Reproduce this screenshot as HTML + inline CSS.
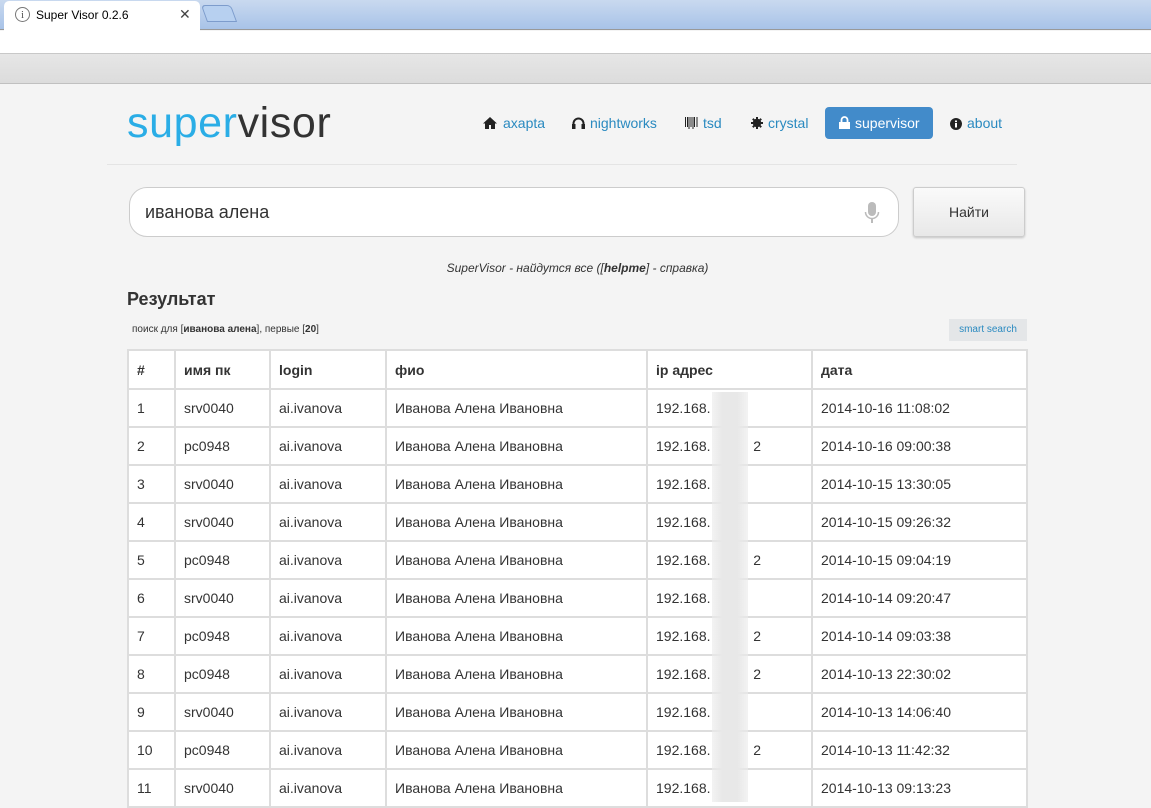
<!DOCTYPE html><html><head><meta charset="utf-8"><style>
*{box-sizing:border-box}body{margin:0;width:1151px;height:808px;overflow:hidden;background:#f4f4f4;font-family:"Liberation Sans",sans-serif;position:relative}
.tabbar{position:absolute;left:0;top:0;width:1151px;height:30px;background:linear-gradient(#c9d9ef,#a8c3e8);border-bottom:1px solid #999}
.tab{position:absolute;left:4px;top:1px;width:196px;height:30px;background:#fff;border-radius:5px 5px 0 0;font-size:12px;color:#000}
.tab2{position:absolute;left:204px;top:5px;width:30px;height:17px;background:#b7d0f0;border:1px solid #7d9ccc;border-radius:4px 4px 0 0;transform:skewX(20deg)}
.addr{position:absolute;top:31px;left:0;width:1151px;height:23px;background:#fff;border-bottom:1px solid #c8c8c8}
.bm{position:absolute;top:54px;left:0;width:1151px;height:30px;background:linear-gradient(#e6e6e6,#dcdcdc);border-bottom:1px solid #c0c0c0}
.logo{position:absolute;left:127px;top:99px;font-size:43px;letter-spacing:0.6px}
.nav{position:absolute;top:107px;height:32px;font-size:14px;color:#2a8ac0;line-height:32px}
.nav svg{position:absolute;top:10px}
.hr{position:absolute;left:107px;top:164px;width:910px;height:1px;background:#e4e4e4}
.search{position:absolute;left:129px;top:187px;width:770px;height:50px;background:#fff;border:1px solid #ccc;border-radius:18px;font-size:18px;color:#333;line-height:48px;padding-left:15px}
.btn{position:absolute;left:913px;top:187px;width:112px;height:50px;background:linear-gradient(#fafafa,#e8e8e8);border:1px solid #ccc;border-radius:3px;box-shadow:0 1px 2px rgba(0,0,0,.2);text-align:center;line-height:48px;font-size:14px;color:#333}
table{position:absolute;left:127px;top:349px;border-collapse:collapse;background:#fff;font-size:14px;color:#333}
td,th{border:2px solid #ddd;height:38px;padding:0 8px;text-align:left;vertical-align:middle}
th{font-weight:bold;height:39px}
.blur{position:absolute;left:712px;top:392px;width:36px;height:410px;background:linear-gradient(90deg,rgba(235,235,235,0.6),#e8e8e8 30%,#e8e8e8 70%,rgba(235,235,235,0.6))}
</style></head><body>
<div class="tabbar"><div class="tab"><span style="position:absolute;left:11px;top:6px;width:15px;height:15px;border:1px solid #777;border-radius:50%;font:11px 'Liberation Serif';text-align:center;line-height:14px;color:#555">i</span><span style="position:absolute;left:32px;top:7px">Super Visor 0.2.6</span><span style="position:absolute;left:175px;top:5px;font-size:14px;color:#444">✕</span></div><div class="tab2"></div></div>
<div class="addr"></div><div class="bm"></div>
<div class="logo"><span style="color:#2aade6">super</span><span style="color:#333">visor</span></div>
<div class="nav" style="left:483px;padding-left:20px"><svg style="left:0" width="14" height="12" viewBox="0 0 14 12"><path d="M7 0L0 6.5h2V12h4V8h2v4h4V6.5h2z" fill="#222"/></svg>axapta</div>
<div class="nav" style="left:572px;padding-left:18px"><svg style="left:0" width="13" height="12" viewBox="0 0 13 12"><path d="M1.5 11V6.5a5 5 0 0 1 10 0V11" fill="none" stroke="#222" stroke-width="2"/><rect x="0" y="7" width="3.5" height="5" fill="#222"/><rect x="9.5" y="7" width="3.5" height="5" fill="#222"/></svg>nightworks</div>
<div class="nav" style="left:685px;padding-left:18px"><svg style="left:0" width="13" height="12" viewBox="0 0 13 12"><path d="M0.5 0v10M2.5 0v10M4 0v12M6 0v10M8 0v12M9.5 0v10M12 0v10" stroke="#222" stroke-width="1"/></svg>tsd</div>
<div class="nav" style="left:751px;padding-left:17px"><svg style="left:0" width="12" height="12" viewBox="0 0 12 12"><circle cx="6" cy="6" r="4.2" fill="#222"/><path d="M6 0v12M0 6h12M1.8 1.8l8.4 8.4M10.2 1.8l-8.4 8.4" stroke="#222" stroke-width="2"/></svg>crystal</div>
<div class="nav" style="left:825px;width:108px;background:#428bca;color:#fff;border-radius:4px;padding-left:30px"><svg style="left:14px;top:9px" width="11" height="13" viewBox="0 0 11 13"><path d="M2.5 6V4a3 3 0 0 1 6 0v2" fill="none" stroke="#fff" stroke-width="1.8"/><rect x="0" y="6" width="11" height="7" fill="#fff"/></svg>supervisor</div>
<div class="nav" style="left:950px;padding-left:17px"><svg style="left:0;top:11px" width="12" height="12" viewBox="0 0 12 12"><circle cx="6" cy="6" r="6" fill="#222"/><rect x="5" y="5" width="2" height="4.5" fill="#fff"/><rect x="5" y="2.5" width="2" height="1.6" fill="#fff"/></svg>about</div>
<div class="hr"></div>
<div class="search">иванова алена<svg style="position:absolute;left:734px;top:14px" width="16" height="22" viewBox="0 0 16 22"><rect x="4" y="0" width="8" height="14" rx="4" fill="#bbb"/><path d="M1.5 10a6.5 6.5 0 0 0 13 0" fill="none" stroke="#bbb" stroke-width="1.5"/><rect x="7" y="16" width="2" height="5" fill="#bbb"/></svg></div>
<div class="btn">Найти</div>
<div style="position:absolute;left:0;width:1151px;top:261px;text-align:center;font-size:12px;font-style:italic;color:#333;padding-left:4px">SuperVisor - найдутся все ([<b>helpme</b>] - справка)</div>
<div style="position:absolute;left:127px;top:289px;font-size:18px;font-weight:bold;color:#333">Результат</div>
<div style="position:absolute;left:132px;top:324px;font-size:10px;color:#333">поиск для [<b>иванова алена</b>], первые [<b>20</b>]</div>
<div style="position:absolute;left:949px;top:319px;width:78px;height:22px;background:#e4e6e8;font-size:10px;color:#2a8ac0;text-align:center;line-height:22px">smart search</div>
<table><tr><th style="width:47px">#</th><th style="width:95px">имя пк</th><th style="width:116px">login</th><th style="width:261px">фио</th><th style="width:165px">ip адрес</th><th style="width:215px">дата</th></tr>
<tr><td>1</td><td>srv0040</td><td>ai.ivanova</td><td>Иванова Алена Ивановна</td><td>192.168.</td><td>2014-10-16 11:08:02</td></tr>
<tr><td>2</td><td>pc0948</td><td>ai.ivanova</td><td>Иванова Алена Ивановна</td><td>192.168.&nbsp;&nbsp;&nbsp;&nbsp;&nbsp;&nbsp;&nbsp;&nbsp;&nbsp;&nbsp;&nbsp;2</td><td>2014-10-16 09:00:38</td></tr>
<tr><td>3</td><td>srv0040</td><td>ai.ivanova</td><td>Иванова Алена Ивановна</td><td>192.168.</td><td>2014-10-15 13:30:05</td></tr>
<tr><td>4</td><td>srv0040</td><td>ai.ivanova</td><td>Иванова Алена Ивановна</td><td>192.168.</td><td>2014-10-15 09:26:32</td></tr>
<tr><td>5</td><td>pc0948</td><td>ai.ivanova</td><td>Иванова Алена Ивановна</td><td>192.168.&nbsp;&nbsp;&nbsp;&nbsp;&nbsp;&nbsp;&nbsp;&nbsp;&nbsp;&nbsp;&nbsp;2</td><td>2014-10-15 09:04:19</td></tr>
<tr><td>6</td><td>srv0040</td><td>ai.ivanova</td><td>Иванова Алена Ивановна</td><td>192.168.</td><td>2014-10-14 09:20:47</td></tr>
<tr><td>7</td><td>pc0948</td><td>ai.ivanova</td><td>Иванова Алена Ивановна</td><td>192.168.&nbsp;&nbsp;&nbsp;&nbsp;&nbsp;&nbsp;&nbsp;&nbsp;&nbsp;&nbsp;&nbsp;2</td><td>2014-10-14 09:03:38</td></tr>
<tr><td>8</td><td>pc0948</td><td>ai.ivanova</td><td>Иванова Алена Ивановна</td><td>192.168.&nbsp;&nbsp;&nbsp;&nbsp;&nbsp;&nbsp;&nbsp;&nbsp;&nbsp;&nbsp;&nbsp;2</td><td>2014-10-13 22:30:02</td></tr>
<tr><td>9</td><td>srv0040</td><td>ai.ivanova</td><td>Иванова Алена Ивановна</td><td>192.168.</td><td>2014-10-13 14:06:40</td></tr>
<tr><td>10</td><td>pc0948</td><td>ai.ivanova</td><td>Иванова Алена Ивановна</td><td>192.168.&nbsp;&nbsp;&nbsp;&nbsp;&nbsp;&nbsp;&nbsp;&nbsp;&nbsp;&nbsp;&nbsp;2</td><td>2014-10-13 11:42:32</td></tr>
<tr><td>11</td><td>srv0040</td><td>ai.ivanova</td><td>Иванова Алена Ивановна</td><td>192.168.</td><td>2014-10-13 09:13:23</td></tr>
</table>
<div class="blur"></div>
</body></html>
